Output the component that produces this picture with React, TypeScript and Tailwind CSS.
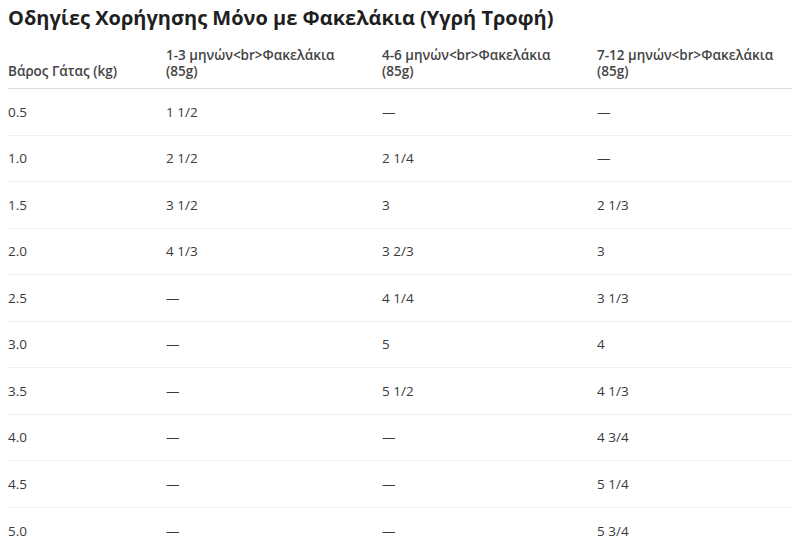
const rows: [string, string, string, string][] = [
  ['0.5', '1 1/2', '—', '—'],
  ['1.0', '2 1/2', '2 1/4', '—'],
  ['1.5', '3 1/2', '3', '2 1/3'],
  ['2.0', '4 1/3', '3 2/3', '3'],
  ['2.5', '—', '4 1/4', '3 1/3'],
  ['3.0', '—', '5', '4'],
  ['3.5', '—', '5 1/2', '4 1/3'],
  ['4.0', '—', '—', '4 3/4'],
  ['4.5', '—', '—', '5 1/4'],
  ['5.0', '—', '—', '5 3/4'],
];

const headers = [
  'Βάρος Γάτας (kg)',
  '1-3 μηνών<br>Φακελάκια (85g)',
  '4-6 μηνών<br>Φακελάκια (85g)',
  '7-12 μηνών<br>Φακελάκια (85g)',
];

export default function App() {
  return (
    <div className="bg-white px-2 font-['Open_Sans',sans-serif] text-[#333]">
      <h2 className="pt-[5px] text-[20px] leading-[26px] font-bold text-[#1f1f1f]">
        Οδηγίες Χορήγησης Μόνο με Φακελάκια (Υγρή Τροφή)
      </h2>

      {/* Table */}
      <table className="mt-[16px] w-[784px] table-fixed border-collapse text-[13.5px]">
        <colgroup>
          <col className="w-[158px]" />
          <col className="w-[216px]" />
          <col className="w-[215px]" />
          <col />
        </colgroup>
        <thead>
          <tr className="border-b border-[#dcdcdc]">
            {headers.map((h, i) => (
              <th
                key={h}
                className={`${i < 3 ? 'pr-[40px]' : 'pr-0'} pb-[9px] text-left align-bottom leading-[16px] font-semibold text-[#444]`}
              >
                {h}
              </th>
            ))}
          </tr>
        </thead>
        <tbody>
          {rows.map((r, i) => (
            <tr key={r[0]} className={i < rows.length - 1 ? 'border-b border-[#efefef]' : ''}>
              {r.map((c, j) => (
                <td key={j} className="h-[46.5px] align-middle leading-[18px] text-[#3a3a3a]">
                  {c}
                </td>
              ))}
            </tr>
          ))}
        </tbody>
      </table>
    </div>
  );
}
